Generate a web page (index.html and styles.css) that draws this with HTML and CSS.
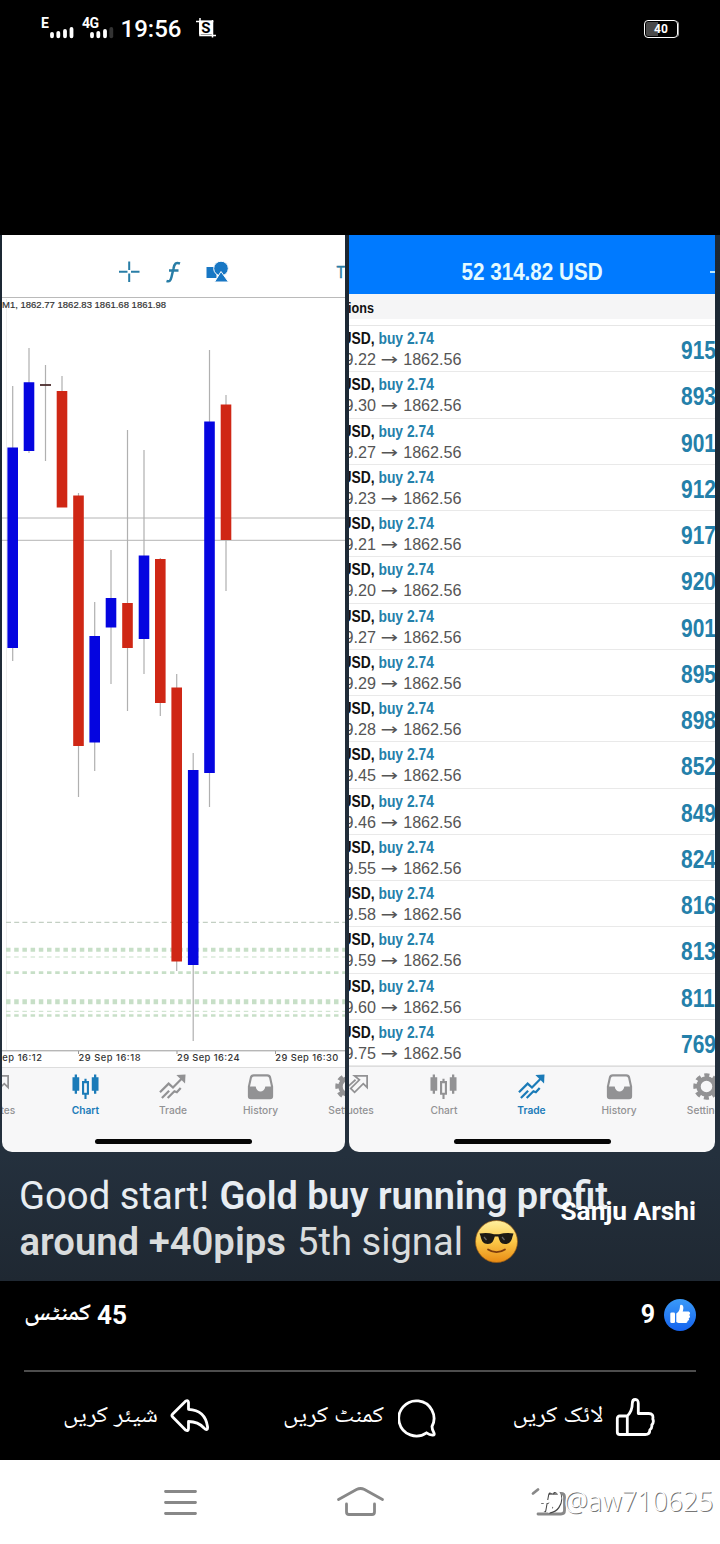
FILE: index.html
```
<!DOCTYPE html>
<html lang="ur">
    <head>
        <meta charset="UTF-8">
        <meta name="viewport" content="width=device-width, initial-scale=1.0">
        <title>Sanju Arshi</title>
        <link rel="stylesheet" href="styles.css">
    </head>
    <body>
        <!-- shared tab bar icons -->
        <svg class="defs" width="0" height="0">
            <symbol id="i-quotes" viewBox="0 0 28 28">
                <path d="M3 16L13 7M12 3h13v12l-4-4-9 9-4-4 9-9z" fill="none" stroke="currentColor" stroke-width="1.8"/>
            </symbol>
            <symbol id="i-chart" viewBox="0 0 28 28">
                <path d="M.5 4.500h2.300V1.500h2.400v3h2.300v14H5.200v3H2.800v-3H.5zM20.500 4.500h2.300V1.500h2.400v3h2.300v14h-2.300v3h-2.400v-3h-2.300z" fill="currentColor"/>
                <path d="M11.500 9.500h5v12h-5zM14 6v3.500M14 21.500V27" fill="none" stroke="currentColor" stroke-width="2.200"/>
            </symbol>
            <symbol id="i-trade" viewBox="0 0 28 28">
                <path d="M1 20l9-9 4.500 4L25 4.500M3 26l7.500-7.500M9 26l7-7 2.500 1 4-4.500" fill="none" stroke="currentColor" stroke-width="2.300"/>
                <path d="M18 2l9.500-.5-.5 9.500z" fill="currentColor"/>
            </symbol>
            <symbol id="i-history" viewBox="0 0 28 28">
                <path d="M7 2.500h14q2.500 0 3 2.500l2 9v10q0 2-2 2H4q-2 0-2-2V14l2-9q.5-2.500 3-2.500z" fill="none" stroke="currentColor" stroke-width="2.200"/>
                <path d="M2 14h7c1 7 9 7 10 0h7v12H2z" fill="currentColor"/>
            </symbol>
            <symbol id="i-settings" viewBox="0 0 28 28">
                <circle cx="14" cy="14" r="8.300" fill="none" stroke="currentColor" stroke-width="4.600"/>
                <circle cx="14" cy="14" r="11.700" fill="none" stroke="currentColor" stroke-width="4" stroke-dasharray="5.200 3.989" stroke-dashoffset="2.600"/>
            </symbol>
        </svg>

        <header class="status">
            <svg width="190" height="58" viewBox="30 0 190 58">
                <text x="41" y="28" class="net">E</text>
                <path d="M52 36.300v-2.500M58.300 36.300v-3.500M65 36.300v-5.300M71.500 36.300v-7.300" class="bars"/>
                <text x="82" y="28" class="net" textLength="17">4G</text>
                <path d="M92 36.300v-2.500M98.300 36.300v-3.500M105 36.300v-5.300" class="bars"/>
                <path d="M111.300 36.300v-7.300" class="bars dim"/>
                <text x="120.500" y="37" class="clock" textLength="61">19:56</text>
                <path d="M199 20.500h14v14h-14z" fill="#fff"/>
                <path d="M196 21.500h17.500M200 18v17.500h16M212.500 20v17.500" fill="none" stroke="#fff" stroke-width="1.500"/>
                <text x="201.300" y="33" class="shot">S</text>
            </svg>
            <div class="battery"><span>40</span></div>
        </header>

        <main class="photo">
            <div class="panes">
                <section class="pane">
                    <div class="toolbar">
                        <svg width="343" height="62" viewBox="2 235 343 62">
                            <path d="M119 271.800h8.500M131 271.800h8.500M129.200 261.500v8.500M129.200 273.500v8.500" fill="none" stroke="#287da6" stroke-width="2"/>
                            <path d="M180 263.500c-4-1.500-5.500 0-6.500 5l-2 8.500c-1 4-2 5-5 4M169 270.500h9.500" fill="none" stroke="#287da6" stroke-width="2.500"/>
                            <path d="M206.500 267h10v11h-10z" fill="#1877c4"/>
                            <circle cx="221" cy="268.500" r="7.300" fill="#1877c4" stroke="#fff" stroke-width="1"/>
                            <path d="M221 271.500l7.500 10.500h-14z" fill="#1877c4" stroke="#fff"/>
                            <text x="336.500" y="278" class="tf" textLength="13" lengthAdjust="spacingAndGlyphs">Tr</text>
                        </svg>
                    </div>
                    <svg class="chart" width="343" height="770" viewBox="2 297 343 770">
                        <path d="M2 297h343" stroke="#777" stroke-width="1.200"/>
                        <path d="M6.500 299v751" stroke="#eee"/>
                        <text x="2" y="307.500" class="ohlc" textLength="164">M1, 1862.77 1862.83 1861.68 1861.98</text>
                        <path d="M2 518h343M2 540.300h343" stroke="#b4b4b4"/>

                        <!-- open order levels -->
                        <g class="levels">
                            <path d="M6 922.300h339" stroke="#b5c4b5" stroke-width="1" stroke-dasharray="5 3.200"/>
                            <path d="M6 949.800h339" stroke-width="4"/>
                            <path d="M6 957h339" stroke-width="1"/>
                            <path d="M6 972.600h339" stroke-width="2.600"/>
                            <path d="M6 1001.700h339" stroke-width="5"/>
                            <path d="M6 1011.300h339" stroke-width="1"/>
                            <path d="M6 1015.600h339" stroke-width="2.500"/>
                        </g>

                        <path class="wick" d="M12.700 386v275M29 348v105M45.500 365v96M62 376v131M78.500 493v304M94.700 602v169M111 550v134M127.500 430v281M144 450v224M160.300 558v158M176.700 674v297M193.200 753v288M209.500 350v457M226 395v196"/>
                        <path class="up" d="M12.700 447.500V648M29 382.300V451M94.700 636v106.500M111 598v29.500M144 555.500V639M193.200 770v195M209.500 421.500V773"/>
                        <path class="down" d="M62 391v116.500M78.500 495.500V746M127.500 603v45M160.300 559v144M176.700 687.500v274M226 404.500V540"/>
                        <path d="M40 385h11" stroke="#4a2c2c" stroke-width="1.800"/>

                        <path d="M2 1050.800h343M78.500 1051v3M177 1051v3M275.500 1051v3" fill="none" stroke="#999"/>
                        <text x="-20" y="1061" class="axis" textLength="62">29 Sep 16:12</text>
                        <text x="78.500" y="1061" class="axis" textLength="62">29 Sep 16:18</text>
                        <text x="177" y="1061" class="axis" textLength="62.500">29 Sep 16:24</text>
                        <text x="275.300" y="1061" class="axis" textLength="63">29 Sep 16:30</text>
                    </svg>
                    <nav class="tabs tabs-left">
                        <div class="tab"><svg><use href="#i-quotes"/></svg>Quotes</div>
                        <div class="tab active"><svg><use href="#i-chart"/></svg>Chart</div>
                        <div class="tab"><svg><use href="#i-trade"/></svg>Trade</div>
                        <div class="tab"><svg><use href="#i-history"/></svg>History</div>
                        <div class="tab"><svg><use href="#i-settings"/></svg>Settings</div>
                    </nav>
                    <div class="home-line"></div>
                </section>

                <section class="pane">
                    <div class="balance"><b>52 314.82 USD</b><i></i></div>
                    <div class="positions"><b>Positions</b></div>
                    <div class="rows">
                        <div class="row"><p><b>XAUUSD, <em>buy 2.74</em></b><span>1859.22 <u>→</u> 1862.56</span></p><strong>915</strong></div>
                        <div class="row"><p><b>XAUUSD, <em>buy 2.74</em></b><span>1859.30 <u>→</u> 1862.56</span></p><strong>893</strong></div>
                        <div class="row"><p><b>XAUUSD, <em>buy 2.74</em></b><span>1859.27 <u>→</u> 1862.56</span></p><strong>901</strong></div>
                        <div class="row"><p><b>XAUUSD, <em>buy 2.74</em></b><span>1859.23 <u>→</u> 1862.56</span></p><strong>912</strong></div>
                        <div class="row"><p><b>XAUUSD, <em>buy 2.74</em></b><span>1859.21 <u>→</u> 1862.56</span></p><strong>917</strong></div>
                        <div class="row"><p><b>XAUUSD, <em>buy 2.74</em></b><span>1859.20 <u>→</u> 1862.56</span></p><strong>920</strong></div>
                        <div class="row"><p><b>XAUUSD, <em>buy 2.74</em></b><span>1859.27 <u>→</u> 1862.56</span></p><strong>901</strong></div>
                        <div class="row"><p><b>XAUUSD, <em>buy 2.74</em></b><span>1859.29 <u>→</u> 1862.56</span></p><strong>895</strong></div>
                        <div class="row"><p><b>XAUUSD, <em>buy 2.74</em></b><span>1859.28 <u>→</u> 1862.56</span></p><strong>898</strong></div>
                        <div class="row"><p><b>XAUUSD, <em>buy 2.74</em></b><span>1859.45 <u>→</u> 1862.56</span></p><strong>852</strong></div>
                        <div class="row"><p><b>XAUUSD, <em>buy 2.74</em></b><span>1859.46 <u>→</u> 1862.56</span></p><strong>849</strong></div>
                        <div class="row"><p><b>XAUUSD, <em>buy 2.74</em></b><span>1859.55 <u>→</u> 1862.56</span></p><strong>824</strong></div>
                        <div class="row"><p><b>XAUUSD, <em>buy 2.74</em></b><span>1859.58 <u>→</u> 1862.56</span></p><strong>816</strong></div>
                        <div class="row"><p><b>XAUUSD, <em>buy 2.74</em></b><span>1859.59 <u>→</u> 1862.56</span></p><strong>813</strong></div>
                        <div class="row"><p><b>XAUUSD, <em>buy 2.74</em></b><span>1859.60 <u>→</u> 1862.56</span></p><strong>811</strong></div>
                        <div class="row"><p><b>XAUUSD, <em>buy 2.74</em></b><span>1859.75 <u>→</u> 1862.56</span></p><strong>769</strong></div>
                    </div>
                    <nav class="tabs tabs-right">
                        <div class="tab"><svg><use href="#i-quotes"/></svg>Quotes</div>
                        <div class="tab"><svg><use href="#i-chart"/></svg>Chart</div>
                        <div class="tab active"><svg><use href="#i-trade"/></svg>Trade</div>
                        <div class="tab"><svg><use href="#i-history"/></svg>History</div>
                        <div class="tab"><svg><use href="#i-settings"/></svg>Settings</div>
                    </nav>
                    <div class="home-line"></div>
                </section>
            </div>

            <div class="caption">
                <svg width="720" height="129" viewBox="0 1152 720 129">
                    <text x="19" y="1209" textLength="190" lengthAdjust="spacingAndGlyphs">Good start!</text>
                    <text x="219.500" y="1209" class="bold" textLength="388.500" lengthAdjust="spacingAndGlyphs">Gold buy running profit</text>
                    <g class="second">
                        <text x="19.500" y="1254.500" class="bold" textLength="266.500" lengthAdjust="spacingAndGlyphs">around +40pips</text>
                        <text x="297" y="1254.500" textLength="166" lengthAdjust="spacingAndGlyphs">5th signal</text>
                    </g>
                    <!-- sunglasses emoji -->
                    <defs>
                        <linearGradient id="face" x2="0" y2="1">
                            <stop offset="0" stop-color="#fff0a0"/>
                            <stop offset=".5" stop-color="#fbc848"/>
                            <stop offset="1" stop-color="#e88a13"/>
                        </linearGradient>
                    </defs>
                    <circle cx="496.500" cy="1241.500" r="21" fill="url(#face)" stroke="#9a5b12" stroke-width=".7"/>
                    <path d="M479.500 1233.500c5-1 10-.8 14.500.7h5c5-1.500 10-1.700 14.500-.7l-1 3c-1 5-3 7.500-7.500 7.500-4.500-.1-5.500-3-6.700-7.500h-3.500c-1.300 4.500-2.500 7.500-7 7.500s-6.300-3-7.300-8z" fill="#1d1a14"/>
                    <path d="M484 1237l2.500 3M502 1237l2.500 3" stroke="#666" stroke-width="1.200"/>
                    <path d="M488 1249.500c5 3.500 12 3.500 17 0" fill="none" stroke="#7c3b0d" stroke-width="1.700" stroke-linecap="round"/>
                </svg>
                <div class="author">Sanju Arshi</div>
            </div>
        </main>

        <footer class="feedback">
            <div class="counts">
                <svg width="120" height="50" viewBox="20 1290 120 50">
                    <text x="24" y="1322.500" class="urdu bold" direction="ltr" textLength="67" lengthAdjust="spacingAndGlyphs">کمنٹس</text>
                    <text x="97" y="1324" class="num" textLength="30" lengthAdjust="spacingAndGlyphs">45</text>
                </svg>
                <div class="likes">
                    <span>9</span>
                    <svg width="32" height="32" viewBox="0 0 32 32">
                        <defs><linearGradient id="blue" x2="0" y2="1"><stop stop-color="#3a9af8"/><stop offset="1" stop-color="#1563ee"/></linearGradient></defs>
                        <circle cx="16" cy="16" r="16" fill="url(#blue)"/>
                        <rect x="6.300" y="13.500" width="4.700" height="10.500" rx="1.300" fill="#fff"/>
                        <path d="M12.300 14.500c3-2 3.500-4 3.700-7.500.3-2 3-1.300 3.300 1 .2 1.700-.2 3-.6 4.500h5c3 0 2.800 2.800 1.500 3.400 1.500 1 .8 3-.5 3.300.8 1.400 0 2.400-1.200 2.700.2 1.400-.8 2-2.500 2h-5c-2 0-2.500-.4-3.700-1z" fill="#fff"/>
                    </svg>
                </div>
            </div>
            <div class="actions">
                <div class="action">
                    <svg width="96" height="40" viewBox="0 0 96 40"><text x="1" y="27" class="urdu" direction="ltr" textLength="95" lengthAdjust="spacingAndGlyphs">شیئر کریں</text></svg>
                    <svg class="icon" width="40" height="40" viewBox="0 0 40 40">
                        <path d="M15.500 3.200L2.700 16q-1.500 1.500 0 3l12.800 13q3 1.500 3-1.500v-7c7 0 11 1.500 15.500 6.500 2.500 2.500 4 2 3.500-1.500C36 18 29.500 11.800 18.500 11.300V4.500q-.3-2.800-3-1.300z"/>
                    </svg>
                </div>
                <div class="action">
                    <svg width="104" height="40" viewBox="0 0 104 40"><text x="0" y="27" class="urdu" direction="ltr" textLength="101" lengthAdjust="spacingAndGlyphs">کمنٹ کریں</text></svg>
                    <svg class="icon" width="40" height="40" viewBox="0 0 40 40">
                        <path d="M28.500 34.800A17.600 17.600 0 1 1 34 28.500q0 3 2 6.500 .8 2-1 2-3 .3-6.500-2.200z"/>
                    </svg>
                </div>
                <div class="action">
                    <svg width="94" height="40" viewBox="0 0 94 40"><text x="2.500" y="27" class="urdu" direction="ltr" textLength="91" lengthAdjust="spacingAndGlyphs">لائک کریں</text></svg>
                    <svg class="icon" width="40" height="40" viewBox="-.8 0 40 40">
                        <path d="M11.500 18H4q-2.500 0-2.500 2.500v13.500q0 2.500 2.500 2.500h25.500q4.500 0 4.500-4.500 2.500-2 2-5 2.500-3 1-6 1-5.500-4-5.500H22.500V5.500q0-4-3-4t-3 4q0 7.500-5 12.500zM11.500 18v18.500"/>
                    </svg>
                </div>
            </div>
        </footer>

        <nav class="navbar">
            <svg width="60" height="40" viewBox="150 1482 60 40"><path d="M165.500 1491.500h30M165.500 1502.500h30M165.500 1513.500h30"/></svg>
            <svg width="60" height="40" viewBox="330 1482 60 40"><path d="M338.500 1499.500l18-10q4-2 8 0l18 10M346.500 1504v8q0 2.500 2.500 2.500h23q2.500 0 2.500-2.500v-8"/></svg>
            <svg width="60" height="40" viewBox="510 1482 60 40"><path d="M533 1493.500l5-4M548 1493.500h13q3.500 0 3.500 3.500v13.500q0 3.500-3.500 3.500h-23"/></svg>
            <div class="watermark">
                <svg width="26" height="30" viewBox="0 0 26 30">
                    <path class="shade" d="M4 16.500h6M15.500 7c-4-2-5.500 0-6 4l-2.500 14M15 6c11-3 11 17-2 20l1-4"/>
                    <path class="light" d="M1 8l6-4M2 15.500h8M14.500 6c-4-2-5.500 0-6 4L6 24M14 5c11-3 11 17-2 20l1-4"/>
                </svg>
                <span>@aw710625</span>
            </div>
        </nav>
    </body>
</html>
```
FILE: styles.css
```
* {
    box-sizing: border-box;
}
body {
    margin: 0;
    width: 720px;
    height: 1544px;
    overflow: hidden;
    background: #000;
    color: #fff;
    font-family: Roboto, "Noto Sans", sans-serif;
}
svg {
    display: block;
    flex: none;
}
.defs {
    display: none;
}

/* status bar */
.status {
    display: flex;
    justify-content: space-between;
    align-items: center;
    height: 58px;
    padding: 0 42px 0 30px;
    margin-bottom: 177px;
}
.net {
    fill: #fff;
    font-size: 14px;
    font-weight: 700;
}
.clock {
    fill: #fff;
    font-size: 24px;
    font-weight: 500;
}
.shot {
    font-size: 15px;
    font-weight: 700;
}
.bars {
    stroke: #fff;
    stroke-width: 3.800;
    stroke-linecap: round;
}
.dim {
    stroke: #333;
}
.battery {
    width: 34px;
    height: 18px;
    padding: 1px;
    border: 1.500px solid #fff;
    border-radius: 4px;
    font-size: 12px;
    font-weight: 700;
    line-height: 15px;
    text-align: center;
    background: linear-gradient(90deg, #4a4a4a 40%, #000 40%);
    background-clip: content-box;
    box-shadow: 2px 0 0 -1px #999;
}

/* shared photo */
.photo {
    height: 1046px;
    background: linear-gradient(#1b2733, #24303d 88%, #1f2832);
}
.panes {
    display: flex;
    gap: 4px;
    height: 917px;
    padding: 0 5px 0 2px;
}
.pane {
    width: 366px;
    overflow: hidden;
    background: #f7f7f8;
    border-radius: 0 0 10px 10px;
    font-family: "Liberation Sans", Arial, sans-serif;
}
.pane:first-child {
    width: 343px;
    flex: none;
}
.toolbar {
    height: 62px;
    background: #fff;
}
.tf {
    font-size: 16px;
    fill: #287da6;
    stroke: #287da6;
    stroke-width: .5px;
}
.chart {
    background: #fff;
}
.ohlc {
    font-size: 9.500px;
    fill: #333;
    stroke: #333;
    stroke-width: .2px;
}
.axis {
    font-family: Inter, sans-serif;
    font-size: 9.300px;
    font-weight: 500;
    fill: #333;
}
.levels {
    stroke: #c7dfc7;
    stroke-dasharray: 4.500 3.700;
}
.wick {
    stroke: #b0b0b0;
    stroke-width: 1.200;
}
.up {
    stroke: #0505e0;
    stroke-width: 10.600;
}
.down {
    stroke: #cf2715;
    stroke-width: 10.600;
}
.tabs {
    display: flex;
    height: 66px;
    padding-top: 6px;
    border-top: 1px solid #ddd;
}
.tabs-left {
    margin-left: -48px;
    height: 65px;
    padding-top: 5px;
}
.tabs-right {
    margin-left: -36.500px;
}
.tab {
    flex: none;
    width: 87.600px;
    display: flex;
    flex-direction: column;
    align-items: center;
    color: #929294;
    font: 500 10.200px/12px Inter, sans-serif;
}
.tab svg {
    width: 27px;
    height: 27px;
    margin-bottom: 4px;
}
.tab.active {
    color: #1b7bb8;
    font-weight: 600;
}
.home-line {
    width: 157px;
    height: 5px;
    margin: 7px auto 0;
    border-radius: 3px;
    background: #050505;
}
.balance {
    display: flex;
    justify-content: center;
    position: relative;
    height: 59px;
    padding-top: 23px;
    background: #007aff;
}
.balance b {
    font-size: 24px;
    line-height: 28px;
    white-space: nowrap;
    transform: scaleX(.86);
    color: #e4faff;
}
.balance i {
    position: absolute;
    right: 0;
    top: 36px;
    width: 5px;
    height: 2px;
    background: #b8e8ff;
}
.positions {
    height: 32px;
    padding-top: 5px;
    border-bottom: 1px solid #e6e6e6;
    background: linear-gradient(#f5f5f6 80%, #fff 80%);
    color: #111;
}
.positions b {
    display: block;
    width: 25px;
    direction: rtl;
    font-size: 15px;
    line-height: 17px;
    transform: scaleX(.84);
    transform-origin: right;
}
.rows {
    background: #fff;
}
.row {
    display: flex;
    justify-content: space-between;
    height: 46.250px;
    border-bottom: 1px solid #e9e9e9;
}
.row p {
    width: 113px;
    margin: 0;
    padding-top: 3px;
    display: flex;
    flex-direction: column;
    align-items: flex-end;
    white-space: nowrap;
}
.row b {
    margin-right: 28px;
    font-size: 16.500px;
    line-height: 19px;
    color: #111;
    transform: scaleX(.84);
    transform-origin: right;
}
.row em {
    font-style: normal;
    color: #2480aa;
}
.row span {
    font-size: 16px;
    line-height: 24px;
    color: #555;
    transform: scaleX(1.010);
    transform-origin: right;
}
.row u {
    display: inline-block;
    width: 18px;
    font-family: "DejaVu Sans", sans-serif;
    line-height: 16px;
    text-decoration: none;
    transform: translateX(2.500px) scaleX(1.300);
    transform-origin: 40% 50%;
}
.row strong {
    width: 34px;
    padding-top: 10px;
    font-size: 25px;
    line-height: 28px;
    color: #2480aa;
    transform: scaleX(.84);
    transform-origin: left;
}

/* caption under the panes */
.caption {
    position: relative;
}
.caption text {
    font-size: 39px;
    fill: #e8edf2;
}
.caption .bold {
    font-weight: 600;
}
.caption .second text {
    fill: #d9dcdd;
}
.author {
    position: absolute;
    right: 24px;
    top: 43px;
    font-size: 26.300px;
    line-height: 32px;
    font-weight: 700;
}

/* reactions */
.feedback {
    height: 179px;
    padding: 0 24px;
}
.counts {
    display: flex;
    justify-content: space-between;
    align-items: center;
    height: 91px;
    padding-bottom: 24px;
    margin-left: -4px;
    position: relative;
}
.counts::after {
    content: "";
    position: absolute;
    left: 4px;
    right: 0;
    bottom: 0;
    height: 2px;
    background: #4d4d4d;
}
.urdu {
    font-family: "Noto Naskh Arabic UI", "Noto Naskh Arabic", "Noto Sans Arabic", "DejaVu Sans", sans-serif;
    font-size: 23px;
    fill: #fff;
}
.urdu.bold {
    font-weight: 700;
}
.num {
    font-size: 26px;
    font-weight: 700;
    fill: #fff;
}
.likes {
    display: flex;
    align-items: center;
    gap: 9px;
    font-size: 25px;
    font-weight: 700;
}
.actions {
    display: flex;
    height: 88px;
    padding: 3px 0 0 38px;
    gap: 72.500px;
    align-items: center;
}
.action {
    display: flex;
    align-items: center;
    gap: 12px;
}
.action + .action {
    gap: 11px;
}
.icon {
    fill: none;
    stroke: #fff;
    stroke-width: 2.800;
    stroke-linejoin: round;
}

/* phone navigation */
.navbar {
    position: relative;
    display: flex;
    gap: 120px;
    height: 84px;
    padding: 22px 150px 0;
    background: #fff;
}
.navbar path {
    fill: none;
    stroke: #888;
    stroke-width: 2.800;
    stroke-linecap: round;
}
.watermark {
    position: absolute;
    left: 538px;
    top: 26px;
    display: flex;
    align-items: center;
    font: 300 27px/30px "Noto Sans", sans-serif;
    color: #fff;
    text-shadow: 1px 1px 0 #777;
}
.watermark span {
    transform: scaleX(.99);
    transform-origin: left;
}
.watermark .shade {
    stroke: #444;
    stroke-width: 2.500;
}
.watermark .light {
    stroke: #fff;
    stroke-width: 2.800;
}
```
